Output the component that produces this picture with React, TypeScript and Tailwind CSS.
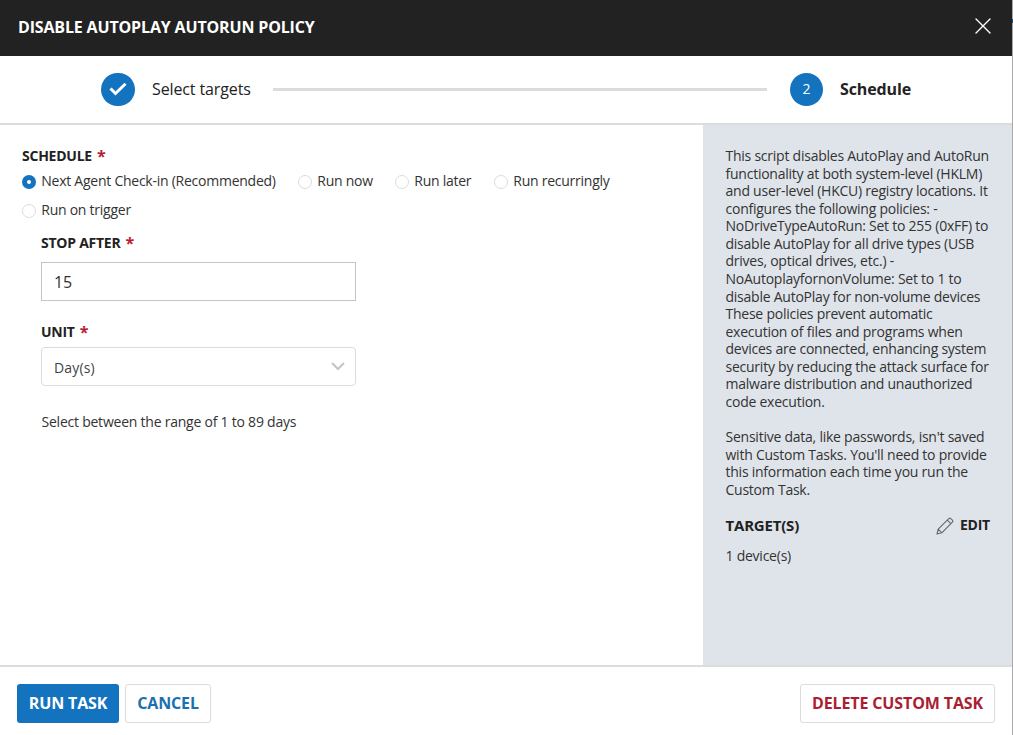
import { useState } from "react";
import type { ReactNode } from "react";

const OPTIONS = [
  { label: "Next Agent Check-in (Recommended)", width: "w-[276px]" },
  { label: "Run now", width: "w-[97px]" },
  { label: "Run later", width: "w-[99px]" },
  { label: "Run recurringly", width: "w-[140px]" },
  { label: "Run on trigger", width: "w-[140px]" },
];

const DESCRIPTION = [
  "This script disables AutoPlay and AutoRun",
  "functionality at both system-level (HKLM)",
  "and user-level (HKCU) registry locations. It",
  "configures the following policies: -",
  "NoDriveTypeAutoRun: Set to 255 (0xFF) to",
  "disable AutoPlay for all drive types (USB",
  "drives, optical drives, etc.) -",
  "NoAutoplayfornonVolume: Set to 1 to",
  "disable AutoPlay for non-volume devices",
  "These policies prevent automatic",
  "execution of files and programs when",
  "devices are connected, enhancing system",
  "security by reducing the attack surface for",
  "malware distribution and unauthorized",
  "code execution.",
];

const NOTICE = [
  "Sensitive data, like passwords, isn't saved",
  "with Custom Tasks. You'll need to provide",
  "this information each time you run the",
  "Custom Task.",
];

function Header() {
  return (
    <header className="flex h-14 shrink-0 items-center justify-between bg-[#222222] pr-[21px] pl-[18px] text-white">
      <h1 className="pb-[2px] text-base font-bold whitespace-nowrap tracking-[-0.16px]">DISABLE AUTOPLAY AUTORUN POLICY</h1>
      <button type="button" aria-label="Close" className="-mt-1">
        <svg width="16" height="16" viewBox="0 0 16 16" fill="none" stroke="currentColor" strokeWidth="1.4" strokeLinecap="round">
          <path d="M1 1l14 14M15 1L1 15" />
        </svg>
      </button>
    </header>
  );
}

function Stepper() {
  return (
    <div className="flex h-[69px] shrink-0 items-center border-b-2 border-[#dcdcdc] pl-[101px] text-base tracking-[-0.12px]">
      <span className="flex h-[33px] w-[34px] items-center justify-center rounded-full bg-[#1373bf] pb-px">
        <svg width="18" height="14" viewBox="0 0 18 14" fill="none" stroke="white" strokeWidth="3">
          <path d="M1.5 6.5l5 5L16.5 1.7" />
        </svg>
      </span>
      <span className="ml-[17px] w-[121px] pb-[2px] whitespace-nowrap">Select targets</span>
      <span className="h-[3px] w-[494px] bg-[#dcdcdc]" />
      <span className="ml-[23px] flex size-[33px] items-center justify-center rounded-full bg-[#1373bf] pb-px text-sm text-white">2</span>
      <span className="ml-[17px] pb-[2px] font-bold">Schedule</span>
    </div>
  );
}

function FieldLabel({ children }: { children: ReactNode }) {
  return (
    <div className="flex h-5 text-sm leading-5 font-bold whitespace-nowrap">
      {children}
      <span className="ml-[5px] text-base leading-5 text-[#b71c33]">*</span>
    </div>
  );
}

function Radio({ label, width, checked, onSelect }: { label: string; width: string; checked: boolean; onSelect: () => void }) {
  return (
    <button type="button" role="radio" aria-checked={checked} className={`flex h-5 items-center text-left ${width}`} onClick={onSelect}>
      <span
        className={`mt-px mr-[5.25px] flex size-[14px] shrink-0 items-center justify-center rounded-full ${
          checked ? "bg-[#1373bf]" : "border border-[#dcdcdc] bg-white"
        }`}
      >
        {checked && <span className="size-1 rounded-full bg-white" />}
      </span>
      <span className="whitespace-nowrap">{label}</span>
    </button>
  );
}

function ScheduleForm() {
  const [selected, setSelected] = useState(OPTIONS[0].label);
  const [amount, setAmount] = useState("15");

  return (
    <main className="w-[703px] shrink-0 pt-[21px] pl-[22px] text-sm tracking-[-0.25px]">
      <FieldLabel>SCHEDULE</FieldLabel>
      <div role="radiogroup" className="mt-[5px] flex flex-wrap gap-y-[9px] text-[#333333]">
        {OPTIONS.map((o) => (
          <Radio key={o.label} label={o.label} width={o.width} checked={o.label === selected} onSelect={() => setSelected(o.label)} />
        ))}
      </div>
      <div className="mt-[13px] ml-[19px] w-[315px]">
        <FieldLabel>STOP AFTER</FieldLabel>
        <input
          value={amount}
          onChange={(e) => setAmount(e.target.value)}
          className="mt-[9px] block h-[39px] w-full border border-[#c4c4c4] px-3 text-base tracking-[-0.1px] text-[#333333] outline-none"
        />
        <div className="mt-[21px]">
          <FieldLabel>UNIT</FieldLabel>
        </div>
        <button type="button" className="mt-[5px] flex h-[39px] w-full items-center justify-between rounded border border-[#dcdcdc] pr-[10px] pl-3">
          <span className="pt-[2px] tracking-[0.15px] text-[#444444]">Day(s)</span>
          <svg width="14" height="9" viewBox="0 0 14 9" fill="none" stroke="#c4c4c4" strokeWidth="2">
            <path d="M1 1l6 6 6-6" />
          </svg>
        </button>
        <p className="mt-[26px] pl-[0.5px] leading-5 whitespace-nowrap tracking-[-0.23px] text-[#333333]">Select between the range of 1 to 89 days</p>
      </div>
    </main>
  );
}

function Lines({ lines }: { lines: string[] }) {
  return (
    <p>
      {lines.map((line) => (
        <span key={line} className="block whitespace-nowrap">
          {line}
        </span>
      ))}
    </p>
  );
}

function Sidebar() {
  return (
    <aside className="min-w-0 flex-1 bg-[#dfe4ea] pt-[22px] pr-[22px] pl-[22.5px] text-sm leading-[17.56px] tracking-[-0.24px] text-[#333333]">
      <Lines lines={DESCRIPTION} />
      <div className="mt-[17.5px]">
        <Lines lines={NOTICE} />
      </div>
      <div className="mt-[18px] flex items-start justify-between font-bold text-[#222222]">
        <h2 className="pt-px text-[15px] tracking-[-0.2px]">TARGET(S)</h2>
        <button type="button" className="flex items-start gap-[6px]">
          <svg width="18" height="18" viewBox="0 0 18 18" fill="none" stroke="#666666" strokeWidth="1.1" strokeLinejoin="round" className="mt-[1px]">
            <path d="M1 17l1.2-4.8L12.8 1.6q1-.9 2 0l1.6 1.6q.9 1 0 2L5.8 15.8zM11.3 3.1l3.6 3.6M2.2 12.2l3.6 3.6" />
          </svg>
          EDIT
        </button>
      </div>
      <p className="mt-[12px]">1 device(s)</p>
    </aside>
  );
}

function Footer() {
  return (
    <footer className="flex h-[70px] shrink-0 gap-[6px] border-t-2 border-[#dcdcdc] pt-[17px] pr-[17px] pl-[17px] text-base font-bold whitespace-nowrap tracking-[-0.13px]">
      <button type="button" className="h-[39px] w-[102px] rounded-[3px] bg-[#1373bf] pb-[2px] text-white">
        RUN TASK
      </button>
      <button type="button" className="h-[39px] w-[86px] rounded-[3px] border border-[#dcdcdc] pb-[2px] text-[#1b70b0]">
        CANCEL
      </button>
      <button type="button" className="ml-auto h-[39px] w-[195px] rounded-[3px] border border-[#dcdcdc] pb-[2px] text-[#aa1e32]">
        DELETE CUSTOM TASK
      </button>
    </footer>
  );
}

export default function App() {
  return (
    <div className="flex h-[735px] w-[1013px] overflow-hidden bg-white font-['Open_Sans',sans-serif] text-[#222222]">
      <div className="flex w-[1012px] shrink-0 flex-col">
        <Header />
        <Stepper />
        <div className="flex h-[540px] shrink-0">
          <ScheduleForm />
          <Sidebar />
        </div>
        <Footer />
      </div>
      {/* sliver of the page behind the dialog */}
      <div className="w-px bg-[#a9a9a9] pt-[19px]">
        <div className="h-1 bg-[#10548a]" />
      </div>
    </div>
  );
}
